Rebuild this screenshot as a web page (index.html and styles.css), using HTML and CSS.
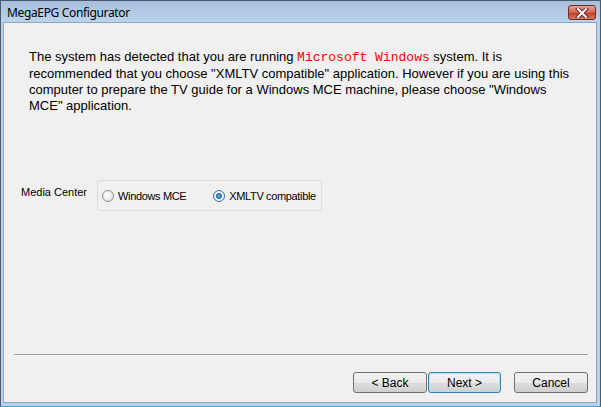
FILE: index.html
```html
<!DOCTYPE html>
<html lang="en">
<head>
    <meta charset="UTF-8">
    <title>MegaEPG Configurator</title>
    <link rel="stylesheet" href="styles.css">
</head>
<body>
    <div class="window">
        <div class="titlebar">
            <span class="title">MegaEPG Configurator</span>
            <button class="close-btn" aria-label="Close">
                <svg width="14" height="10" viewBox="0 0 14 10">
                    <path d="M3 1 L11 9 M11 1 L3 9" stroke="#6b2a22" stroke-width="4" stroke-linecap="square"/>
                    <path d="M3 1 L11 9 M11 1 L3 9" stroke="#fff" stroke-width="2" stroke-linecap="square"/>
                </svg>
            </button>
        </div>
        <div class="client">
            <div class="intro">
                <span class="line">The system has detected that you are running <span class="os">Microsoft Windows</span> system. It is</span>
                <span class="line">recommended that you choose "XMLTV compatible" application. However if you are using this</span>
                <span class="line">computer to prepare the TV guide for a Windows MCE machine, please choose "Windows</span>
                <span class="line">MCE" application.</span>
            </div>
            <div class="media-row">
                <span class="media-label">Media Center</span>
                <div class="group">
                    <label class="radio"><span class="dot"></span>Windows MCE</label>
                    <label class="radio checked"><span class="dot"></span>XMLTV compatible</label>
                </div>
            </div>
            <div class="spacer"></div>
            <div class="separator"></div>
            <div class="buttons">
                <button class="btn">&lt; Back</button>
                <button class="btn default">Next &gt;</button>
                <button class="btn cancel">Cancel</button>
            </div>
        </div>
    </div>
</body>
</html>
```

FILE: styles.css
```css
body {
    margin: 0;
    width: 601px;
    height: 407px;
    overflow: hidden;
    font-family: "Liberation Sans", Arial, sans-serif;
}

.window {
    box-sizing: border-box;
    width: 601px;
    height: 407px;
    display: flex;
    flex-direction: column;
    background: #b9d1ea;
    border: 1px solid #4a5a6a;
    border-bottom-color: #3aa6c9;
}

.titlebar {
    height: 21px;
    display: flex;
    align-items: center;
    justify-content: space-between;
    padding: 0 4px 0 6px;
    background: linear-gradient(#a5bfdc, #bcd3ec);
}

.title {
    font-family: "Noto Sans", "DejaVu Sans", sans-serif;
    font-size: 12px;
    letter-spacing: -0.35px;
    color: #000;
    padding-top: 1px;
}

.close-btn {
    width: 28px;
    height: 15px;
    margin-top: 2px;
    padding: 0;
    display: flex;
    align-items: center;
    justify-content: center;
    border: 1px solid #6e2c27;
    border-radius: 3px;
    background: linear-gradient(#e9a394, #d0634e 50%, #b93a24 51%, #d77b5e);
}

.client {
    flex: 1;
    display: flex;
    flex-direction: column;
    margin: 0 3px 3px 2px;
    background: #f0f0f0;
    border: 1px solid #8aa6c6;
}

.intro {
    display: flex;
    flex-direction: column;
    margin: 26px 0 0 25px;
    font-size: 13px;
    line-height: 16px;
    color: #000;
}

.line {
    white-space: nowrap;
}

.os {
    font-family: "Liberation Mono", "Courier New", monospace;
    color: #ff0000;
}

.media-row {
    display: flex;
    align-items: flex-start;
    margin: 66px 0 0 17px;
}

.media-label {
    font-size: 11px;
    margin-top: 6px;
    width: 76px;
    white-space: nowrap;
}

.group {
    display: flex;
    align-items: center;
    height: 29px;
    padding: 0 0 0 4px;
    width: 219px;
    border: 1px solid #d5dfe5;
    border-radius: 3px;
    font-size: 11px;
    letter-spacing: -0.35px;
}

.radio {
    display: flex;
    align-items: center;
    gap: 4px;
    white-space: nowrap;
    margin-right: 27px;
}

.dot {
    box-sizing: border-box;
    width: 12px;
    height: 12px;
    border-radius: 50%;
    border: 1px solid #8f8f8f;
    background: radial-gradient(circle at 40% 40%, #ffffff, #dcdcdc);
}

.checked .dot {
    border-color: #3c6f9c;
    background: radial-gradient(circle, #5fc3f5 0, #1d6aa7 2.5px, #f6f6f6 3.5px, #e0e0e0 100%);
}

.spacer {
    flex: 1;
}

.separator {
    margin: 0 8px 0 10px;
    border-top: 1px solid #a0a0a0;
    border-bottom: 1px solid #ffffff;
}

.buttons {
    display: flex;
    justify-content: flex-end;
    padding: 16px 8px 9px 0;
}

.btn {
    box-sizing: border-box;
    width: 74px;
    height: 21px;
    padding: 0;
    margin-left: 1px;
    font-family: "Liberation Sans", Arial, sans-serif;
    font-size: 12px;
    color: #000;
    border: 1px solid #707070;
    border-radius: 3px;
    background: linear-gradient(#f2f2f2, #ebebeb 50%, #dddddd 51%, #cfcfcf);
}

.btn.default {
    width: 73px;
    border-color: #3c7fb1;
    box-shadow: inset 0 0 0 1px #a8e2f7;
}

.btn.cancel {
    margin-left: 13px;
}
```
